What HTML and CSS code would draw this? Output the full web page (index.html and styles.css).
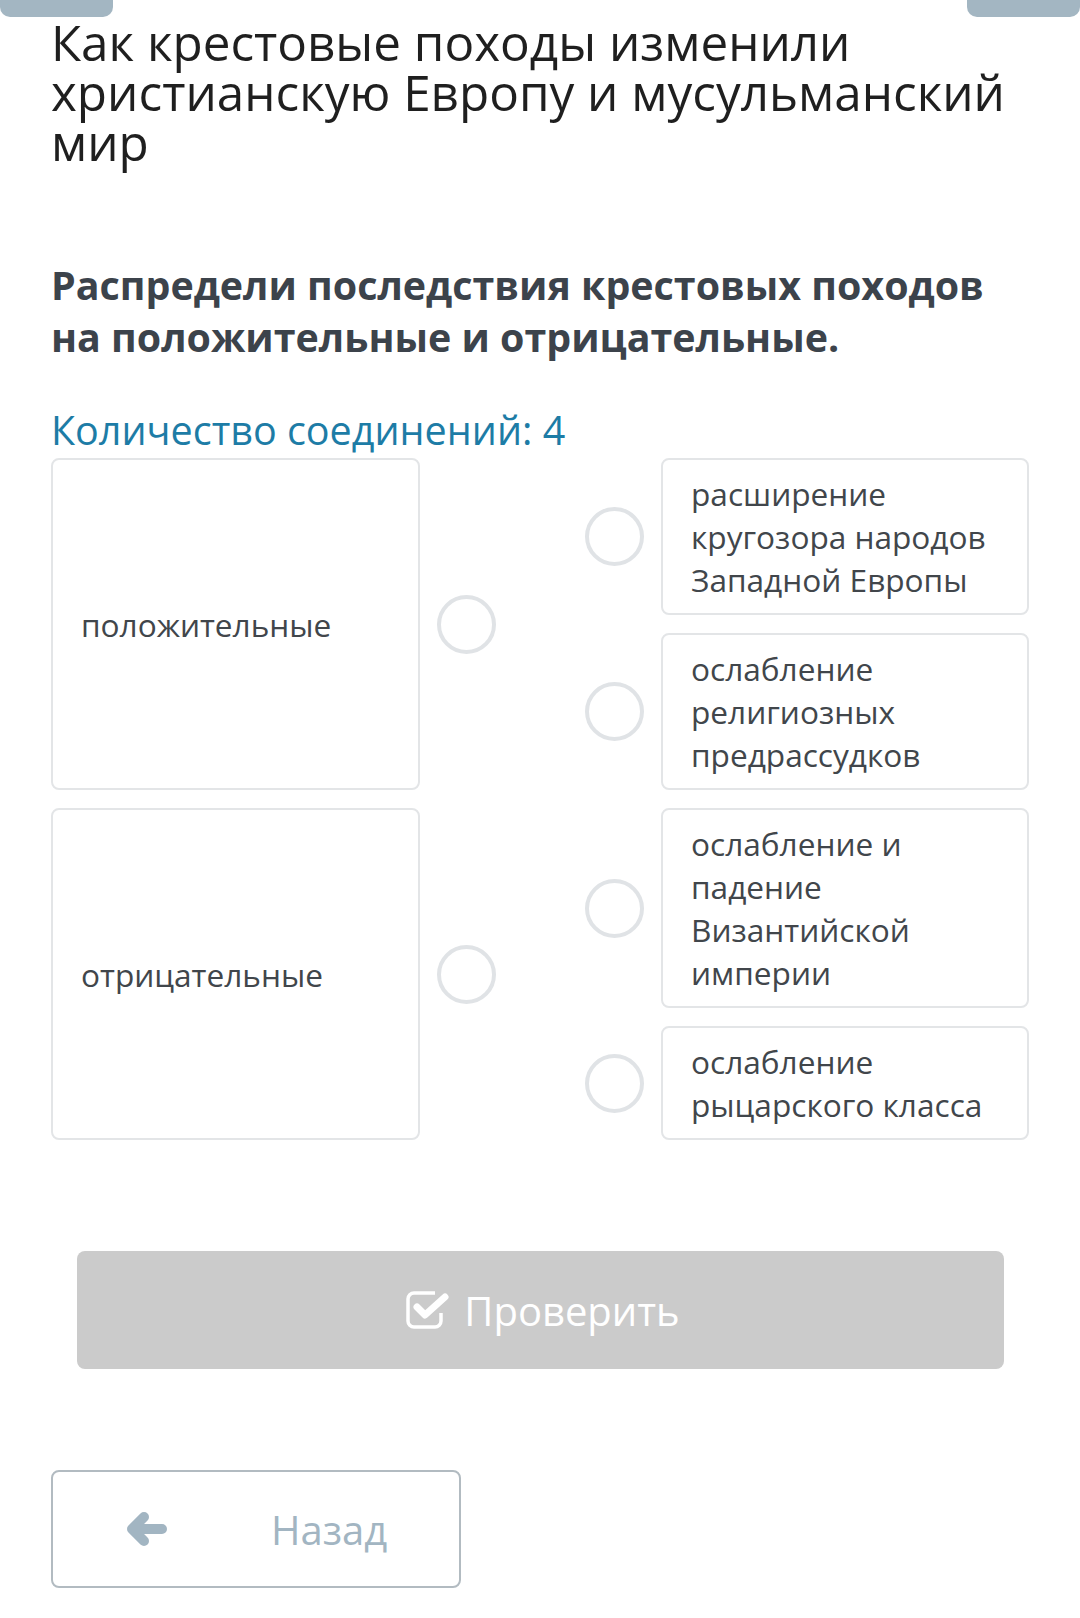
FILE: index.html
```html
<!DOCTYPE html>
<html lang="ru">
<head>
	<meta charset="UTF-8">
	<title>Соединения</title>
	<link rel="stylesheet" href="styles.css">
</head>
<body>
	<div class="tabs">
		<div class="tab"></div>
		<div class="tab"></div>
	</div>
	<div class="page">
		<h1 class="title">Как крестовые походы изменили христианскую Европу и мусульманский мир</h1>
		<h2 class="task">Распредели последствия крестовых походов на положительные и отрицательные.</h2>
		<p class="count">Количество соединений: 4</p>

		<!-- соединения -->
		<div class="match">
			<div class="box left r1">положительные</div>
			<div class="dot dot-left r1"></div>
			<div class="box left r3">отрицательные</div>
			<div class="dot dot-left r3"></div>

			<div class="dot dot-right q1"></div>
			<div class="box right q1">расширение кругозора народов Западной Европы</div>
			<div class="dot dot-right q2"></div>
			<div class="box right q2">ослабление религиозных предрассудков</div>
			<div class="dot dot-right q3"></div>
			<div class="box right q3">ослабление и падение Византийской империи</div>
			<div class="dot dot-right q4"></div>
			<div class="box right q4">ослабление рыцарского класса</div>
		</div>

		<div class="check-wrap">
			<button class="check">
				<svg class="check-icon" width="44" height="40" viewBox="0 0 44 40">
					<path d="M30 3 H9 a6 6 0 0 0 -6 6 V31 a6 6 0 0 0 6 6 H30 a6 6 0 0 0 6 -6 V23" fill="none" stroke="#fff" stroke-width="3.5"/>
					<path d="M12 17 L20 25 L40 7" fill="none" stroke="#fff" stroke-width="7" stroke-linecap="round" stroke-linejoin="round"/>
				</svg>
				<span>Проверить</span>
			</button>
		</div>

		<button class="back">
			<svg class="arrow" width="40" height="34" viewBox="0 0 40 34">
				<path d="M5 17 L17 5 M5 17 L17 29 M5 17 H35" fill="none" stroke="#a2b5c2" stroke-width="10" stroke-linecap="round" stroke-linejoin="round"/>
			</svg>
			<span>Назад</span>
		</button>
	</div>
</body>
</html>
```
FILE: styles.css
```css
*{margin:0;padding:0;box-sizing:border-box;}
body {
	background: #fff;
	font-family: "Open Sans", "Noto Sans", sans-serif;
	width: 1080px;
}
.tabs {
	display: flex;
	justify-content: space-between;
	height: 17px;
}
.tab {
	width: 113px;
	height: 17px;
	background: #a3b6c2;
	border-radius: 0 0 10px 10px;
}
.page {
	padding: 0 51px 0 51px;
}
.title {
	font-weight: 400;
	font-size: 49.4px;
	line-height: 50px;
	color: #1f1f1f;
}
.task {
	margin-top: 92px;
	font-size: 39.4px;
	line-height: 52px;
	font-weight: 700;
	color: #3c434b;
}
.count {
	margin-top: 44px;
	font-size: 39.5px;
	line-height: 46px;
	color: #1d7ca6;
}
.match {
	margin-top: 5px;
	display: grid;
	grid-template-columns: 369px 1fr 1fr 368px;
	grid-template-rows: auto auto auto auto;
	row-gap: 18px;
}
.box {
	border: 2px solid #e3e5e7;
	border-radius: 8px;
	font-size: 31.6px;
	line-height: 43px;
	color: #41464b;
	padding: 12px 14px 12px 28px;
}
.left {
	grid-column: 1;
	display: flex;
	align-items: center;
}
.right {
	grid-column: 4;
}
.r1 { grid-row: 1 / span 2; }
.r3 { grid-row: 3 / span 2; }
.q1 { grid-row: 1; }
.q2 { grid-row: 2; }
.q3 { grid-row: 3; }
.q4 { grid-row: 4; }
.dot {
	width: 59px;
	height: 59px;
	border: 4px solid #e0e3e6;
	border-radius: 50%;
	align-self: center;
}
.dot-left {
	grid-column: 2;
	margin-left: 17px;
}
.dot-right {
	grid-column: 3;
	justify-self: end;
	margin-right: 17px;
}
.check-wrap {
	padding: 0 25px 0 26px;
	margin-top: 111px;
}
.check {
	width: 100%;
	height: 118px;
	background: #cbcbcb;
	border: none;
	border-radius: 8px;
	display: flex;
	align-items: center;
	justify-content: center;
	font-family: inherit;
	font-size: 40px;
	color: #fff;
}
.check-icon {
	margin-right: 15px;
	margin-left: 4px;
}
.back {
	margin-top: 101px;
	width: 410px;
	height: 118px;
	background: #fff;
	border: 2px solid #b2bbc1;
	border-radius: 8px;
	display: flex;
	align-items: center;
	font-family: inherit;
	font-size: 40px;
	color: #a2b5c2;
}
.arrow {
	margin-left: 74px;
	margin-right: 104px;
}
```
